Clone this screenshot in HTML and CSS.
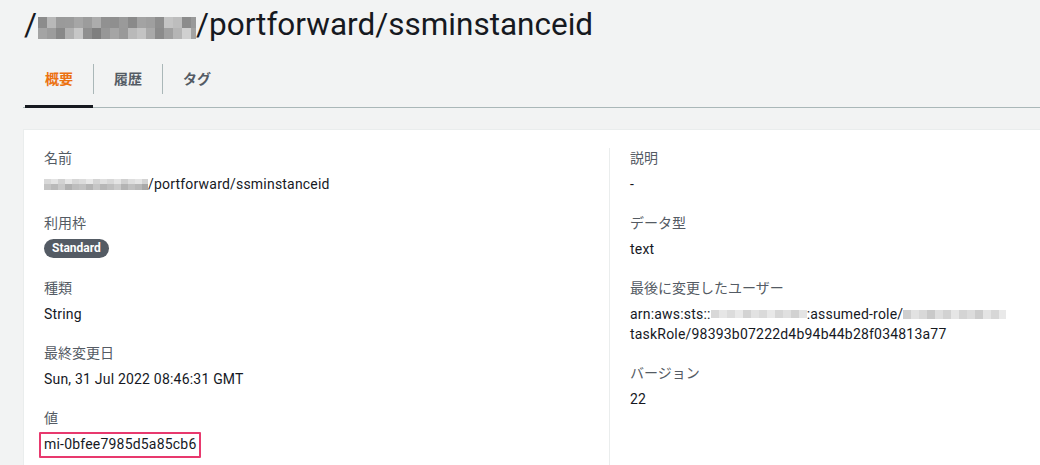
FILE: index.html
```html
<!DOCTYPE html>
<html lang="ja">
<head>
<meta charset="utf-8">
<title>ssminstanceid</title>
<link rel="stylesheet" href="styles.css">
</head>
<body>
<header class="page-head">
  <h1 class="title">/<span class="redact redact-title"></span>/portforward/ssminstanceid</h1>
</header>
<nav class="tabs">
  <div class="tab active"><span class="tab-label">概要</span></div>
  <div class="tab"><span class="tab-label sep">履歴</span></div>
  <div class="tab"><span class="tab-label sep">タグ</span></div>
</nav>
<section class="card">
  <div class="col">
    <div class="field">
      <div class="label">名前</div>
      <div class="value"><span class="redact redact-name"></span>/portforward/ssminstanceid</div>
    </div>
    <div class="field">
      <div class="label">利用枠</div>
      <div class="value"><span class="badge">Standard</span></div>
    </div>
    <div class="field">
      <div class="label">種類</div>
      <div class="value">String</div>
    </div>
    <div class="field">
      <div class="label">最終変更日</div>
      <div class="value">Sun, 31 Jul 2022 08:46:31 GMT</div>
    </div>
    <div class="field">
      <div class="label">値</div>
      <div class="value"><span class="highlight">mi-0bfee7985d5a85cb6</span></div>
    </div>
  </div>
  <div class="col col-right">
    <div class="field">
      <div class="label">説明</div>
      <div class="value">-</div>
    </div>
    <div class="field">
      <div class="label">データ型</div>
      <div class="value">text</div>
    </div>
    <div class="field">
      <div class="label">最後に変更したユーザー</div>
      <div class="value nowrap">arn:aws:sts::<span class="redact redact-acct"></span>:assumed-role/<span class="redact redact-role"></span><br>taskRole/98393b07222d4b94b44b28f034813a77</div>
    </div>
    <div class="field">
      <div class="label">バージョン</div>
      <div class="value">22</div>
    </div>
  </div>
</section>
</body>
</html>
```
FILE: styles.css
```css
html, body {
  margin: 0;
  padding: 0;
}
body {
  background: #f2f3f3;
  font-family: Roboto, "Noto Sans CJK JP", sans-serif;
  color: #16191f;
  font-size: 14px;
  overflow: hidden;
}
.page-head {
  padding: 7px 0 0 24px;
}
.title {
  margin: 0;
  font-size: 31.5px;
  line-height: 36px;
  font-weight: 400;
  color: #16191f;
  white-space: nowrap;
}
.redact {
  display: inline-block;
  background-repeat: no-repeat;
}
.redact-title {
  width: 158px;
  height: 22px;
  margin: 0 0 0 1px;
  vertical-align: -4px;
  background-image:
    linear-gradient(90deg, #8c8c8c 0 9px, #b8b8b8 9px 18px, #9a9a9a 18px 27px, #9b9b9b 27px 36px, #a6a6a6 36px 45px, #9c9c9c 45px 54px, #acacac 54px 63px, #919191 63px 72px, #8f8f8f 72px 81px, #9a9a9a 81px 90px, #8a8a8a 90px 99px, #a3a3a3 99px 108px, #9f9f9f 108px 117px, #8e8e8e 117px 126px, #c4c4c4 126px 135px, #bdbdbd 135px 144px, #8c8c8c 144px 153px, #999999 153px 162px),
    linear-gradient(90deg, #a4a4a4 0 9px, #9c9c9c 9px 18px, #888888 18px 27px, #b0b0b0 27px 36px, #c6c6c6 36px 45px, #8f8f8f 45px 54px, #7f7f7f 54px 63px, #979797 63px 72px, #a5a5a5 72px 81px, #999999 81px 90px, #b9b9b9 90px 99px, #c3c3c3 99px 108px, #a9a9a9 108px 117px, #8b8b8b 117px 126px, #a0a0a0 126px 135px, #b5b5b5 135px 144px, #d0d0d0 144px 153px, #a3a3a3 153px 162px);
  background-size: 100% 11px, 100% 11px;
  background-position: 0 0, 0 11px;
}
.redact-name {
  width: 104px;
  height: 11px;
  vertical-align: -1px;
  background-image:
    linear-gradient(90deg, #d9d9d9 0 7px, #e3e3e3 7px 14px, #d2d2d2 14px 21px, #e6e6e6 21px 28px, #d6d6d6 28px 35px, #dcdcdc 35px 42px, #e8e8e8 42px 49px, #d4d4d4 49px 56px, #e0e0e0 56px 63px, #d8d8d8 63px 70px, #e4e4e4 70px 77px, #d0d0d0 77px 84px, #dedede 84px 91px, #e5e5e5 91px 98px, #d3d3d3 98px 105px),
    linear-gradient(90deg, #c4c4c4 0 7px, #b9b9b9 7px 14px, #c8c8c8 14px 21px, #b0b0b0 21px 28px, #bdbdbd 28px 35px, #c2c2c2 35px 42px, #b4b4b4 42px 49px, #c6c6c6 49px 56px, #b7b7b7 56px 63px, #bfbfbf 63px 70px, #cacaca 70px 77px, #b3b3b3 77px 84px, #c0c0c0 84px 91px, #b8b8b8 91px 98px, #a8a8a8 98px 105px);
  background-size: 100% 5px, 100% 6px;
  background-position: 0 0, 0 5px;
}
.redact-acct {
  width: 96px;
  height: 8px;
  vertical-align: 1px;
  background-image: linear-gradient(90deg, #d8d8d8 0 8px, #e6e6e6 8px 16px, #dcdcdc 16px 24px, #e9e9e9 24px 32px, #d3d3d3 32px 40px, #e2e2e2 40px 48px, #dadada 48px 56px, #e8e8e8 56px 64px, #d6d6d6 64px 72px, #e0e0e0 72px 80px, #d2d2d2 80px 88px, #e4e4e4 88px 96px);
}
.redact-role {
  width: 103px;
  height: 9px;
  vertical-align: 0;
  background-image: linear-gradient(90deg, #cfcfcf 0 8px, #e2e2e2 8px 16px, #d8d8d8 16px 24px, #c9c9c9 24px 32px, #dedede 32px 40px, #d2d2d2 40px 48px, #e6e6e6 48px 56px, #d4d4d4 56px 64px, #dcdcdc 64px 72px, #cccccc 72px 80px, #e4e4e4 80px 88px, #d7d7d7 88px 96px, #e9e9e9 96px 104px);
}
.tabs {
  display: flex;
  margin: 21px 0 0 23px;
  padding-left: 2px;
  border-bottom: 1px solid #aab7b8;
}
.tab {
  padding-bottom: 11px;
  border-bottom: 3px solid transparent;
  margin-bottom: -1px;
}
.tab.active {
  border-bottom-color: #16191f;
}
.tab-label {
  display: block;
  padding: 5px 20px;
  line-height: 20px;
  font-size: 14px;
  font-weight: 700;
  color: #545b64;
}
.tab.active .tab-label {
  color: #ec7211;
}
.tab-label.sep {
  border-left: 1px solid #aab7b8;
}
.card {
  display: grid;
  grid-template-columns: 565px 1fr;
  margin: 21px 0 0 23px;
  padding: 18px 0 20px 20px;
  background: #ffffff;
  border-top: 1px solid #eaeded;
  border-left: 1px solid #eaeded;
}
.col-right {
  border-left: 1px solid #eaeded;
  padding-left: 20px;
}
.field {
  margin-bottom: 19px;
}
.label {
  line-height: 20px;
  color: #545b64;
}
.value {
  margin-top: 6px;
  line-height: 20px;
  color: #16191f;
  letter-spacing: 0.2px;
}
.nowrap {
  white-space: nowrap;
}
.badge {
  display: inline-block;
  vertical-align: top;
  height: 19px;
  line-height: 19px;
  padding: 0 8px;
  border-radius: 10px;
  background: #545b64;
  color: #ffffff;
  font-size: 12px;
  font-weight: 700;
  letter-spacing: 0;
}
.highlight {
  display: inline-block;
  margin: -2px 0 0 -5px;
  padding: 0 3px 2px;
  border: 2px solid #e8396e;
  border-radius: 1px;
}
```
